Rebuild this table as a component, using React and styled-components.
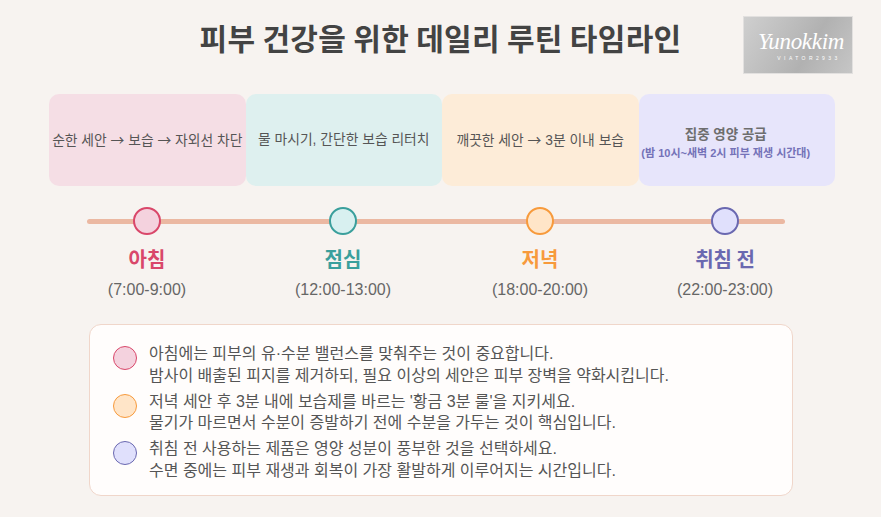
import React from "react";
import styled, { createGlobalStyle } from "styled-components";

const Global = createGlobalStyle`
  html, body { margin: 0; padding: 0; background: #f7f3f0; }
  body { font-family: "Liberation Sans", "Noto Sans CJK KR", sans-serif; color: #555; }
`;

const Page = styled.div`
  width: 881px;
  height: 517px;
  background: #f7f3f0;
  overflow: hidden;
`;

const Header = styled.header`
  display: grid;
  grid-template-columns: 1fr auto 1fr;
  align-items: start;
  height: 94px;
`;

const Title = styled.h1`
  grid-column: 2;
  margin: 19px 0 0;
  font-family: "Noto Sans CJK KR", sans-serif;
  font-size: 30px;
  line-height: 36px;
  font-weight: 700;
  color: #434343;
  letter-spacing: 0.3px;
`;

const Logo = styled.div`
  grid-column: 3;
  justify-self: end;
  margin: 16px 28px 0 0;
  width: 110px;
  height: 58px;
  box-sizing: border-box;
  border: 1px solid #e2e0df;
  background: linear-gradient(120deg, #cfcfcf 0%, #b9b9b9 45%, #b1b1b1 60%, #c6c6c6 100%);
  display: flex;
  flex-direction: column;
  align-items: center;
  justify-content: center;
  color: #fff;
`;

const LogoScript = styled.span`
  font-family: "Liberation Serif", serif;
  font-style: italic;
  font-size: 23px;
  line-height: 24px;
  font-weight: 400;
  letter-spacing: -0.3px;
  margin-left: 6px;
`;

const LogoSub = styled.span`
  font-family: "Liberation Sans", sans-serif;
  font-size: 5px;
  letter-spacing: 3.4px;
  margin: 1px 0 0 22px;
`;

const Cards = styled.div`
  display: grid;
  grid-template-columns: repeat(4, 196.5px);
  margin-left: 49px;
  height: 92px;
`;

const Card = styled.div`
  background: ${(p) => p.$bg};
  border-radius: 10px;
  display: flex;
  flex-direction: column;
  align-items: center;
  justify-content: center;
  box-sizing: border-box;
  padding: ${(p) => p.$pad || "0"};
  font-size: 13.8px;
  line-height: 18px;
  color: #555;
  white-space: nowrap;
`;

const CardText = styled.span`
  display: block;
`;

const Arrow = styled.span`
  font-family: "Noto Sans CJK KR", sans-serif;
`;

const CardTitle = styled.span`
  font-size: 13.5px;
  font-weight: 600;
  color: #6e6e6e;
`;

const CardSub = styled.span`
  margin-top: 2px;
  font-size: 11px;
  line-height: 14px;
  font-weight: 600;
  color: #7472b8;
`;

const Timeline = styled.div`
  position: relative;
  display: grid;
  grid-template-columns: 196px 196px 198px 172px;
  width: 786px;
  margin: 21px 0 0 49px;
  &::before {
    content: "";
    position: absolute;
    left: 38px;
    width: 698px;
    top: 11.5px;
    height: 5px;
    border-radius: 3px;
    background: #ebb8a2;
  }
`;

const Stop = styled.div`
  position: relative;
  display: flex;
  flex-direction: column;
  align-items: center;
`;

const Dot = styled.div`
  width: 28px;
  height: 28px;
  box-sizing: border-box;
  border-radius: 50%;
  border: 2px solid ${(p) => p.$stroke};
  background: ${(p) => p.$fill};
`;

const StopName = styled.div`
  margin-top: 10px;
  font-family: "Noto Sans CJK KR", sans-serif;
  font-size: 20px;
  line-height: 28px;
  font-weight: 700;
  color: ${(p) => p.$color};
`;

const StopTime = styled.div`
  margin-top: 8px;
  font-size: 16px;
  line-height: 18px;
  color: #666;
`;

const Notes = styled.div`
  width: 704px;
  height: 172px;
  box-sizing: border-box;
  margin: 25px 0 0 89px;
  padding: 18px 20px 0 23px;
  background: #fffdfc;
  border: 1px solid #f0d6ca;
  border-radius: 12px;
  display: flex;
  flex-direction: column;
  gap: 4.5px;
`;

const Note = styled.div`
  display: flex;
  align-items: flex-start;
  gap: 12px;
`;

const NoteDot = styled.div`
  flex: none;
  width: 24px;
  height: 24px;
  box-sizing: border-box;
  margin-top: 3px;
  border-radius: 50%;
  border: 1.5px solid ${(p) => p.$stroke};
  background: ${(p) => p.$fill};
`;

const NoteText = styled.p`
  margin: 0;
  font-size: 16px;
  line-height: 21.5px;
  color: #555;
  white-space: nowrap;
`;

const stops = [
  { name: "아침", time: "(7:00-9:00)", color: "#d9476a", fill: "#f4d2de" },
  { name: "점심", time: "(12:00-13:00)", color: "#3a9f9c", fill: "#d8f0f0" },
  { name: "저녁", time: "(18:00-20:00)", color: "#f79a3c", fill: "#ffe5c8" },
  { name: "취침 전", time: "(22:00-23:00)", color: "#6a68b0", fill: "#e0e0fc" },
];

const notes = [
  {
    s: stops[0],
    lines: [
      "아침에는 피부의 유·수분 밸런스를 맞춰주는 것이 중요합니다.",
      "밤사이 배출된 피지를 제거하되, 필요 이상의 세안은 피부 장벽을 약화시킵니다.",
    ],
  },
  {
    s: stops[2],
    lines: [
      "저녁 세안 후 3분 내에 보습제를 바르는 '황금 3분 룰'을 지키세요.",
      "물기가 마르면서 수분이 증발하기 전에 수분을 가두는 것이 핵심입니다.",
    ],
  },
  {
    s: stops[3],
    lines: [
      "취침 전 사용하는 제품은 영양 성분이 풍부한 것을 선택하세요.",
      "수면 중에는 피부 재생과 회복이 가장 활발하게 이루어지는 시간입니다.",
    ],
  },
];

export default function App() {
  return (
    <Page>
      <Global />
      <Header>
        <Title>피부 건강을 위한 데일리 루틴 타임라인</Title>
        <Logo>
          <LogoScript>Yunokkim</LogoScript>
          <LogoSub>VIATOR2933</LogoSub>
        </Logo>
      </Header>
      <Cards>
        <Card $bg="#f5dee5">
          <CardText>
            순한 세안 <Arrow>→</Arrow> 보습 <Arrow>→</Arrow> 자외선 차단
          </CardText>
        </Card>
        <Card $bg="#def0ef">
          <CardText>물 마시기, 간단한 보습 리터치</CardText>
        </Card>
        <Card $bg="#fdecd8">
          <CardText>
            깨끗한 세안 <Arrow>→</Arrow> 3분 이내 보습
          </CardText>
        </Card>
        <Card $bg="#e7e5fb" $pad="6px 22px 0 0">
          <CardTitle>집중 영양 공급</CardTitle>
          <CardSub>(밤 10시~새벽 2시 피부 재생 시간대)</CardSub>
        </Card>
      </Cards>
      <Timeline>
        {stops.map((s) => (
          <Stop key={s.name}>
            <Dot $stroke={s.color} $fill={s.fill} />
            <StopName $color={s.color}>{s.name}</StopName>
            <StopTime>{s.time}</StopTime>
          </Stop>
        ))}
      </Timeline>
      <Notes>
        {notes.map((n, i) => (
          <Note key={i}>
            <NoteDot $stroke={n.s.color} $fill={n.s.fill} />
            <NoteText>
              {n.lines[0]}
              <br />
              {n.lines[1]}
            </NoteText>
          </Note>
        ))}
      </Notes>
    </Page>
  );
}
